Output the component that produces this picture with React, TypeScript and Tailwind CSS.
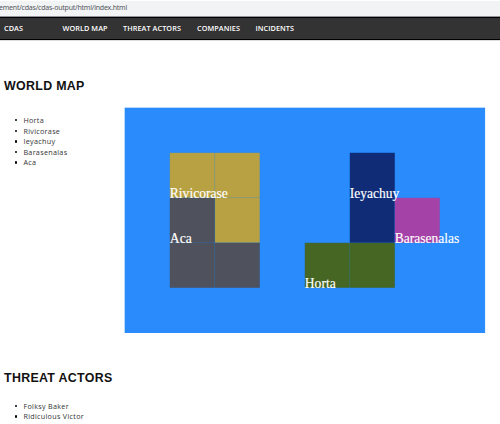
const CELL = 45;

type Region = { name: string; color: string; width: number; label: [number, number]; cells: [number, number][] };

const regions: Region[] = [
  { name: "Rivicorase", color: "#b8a143", width: 58, label: [1, 2], cells: [[1, 1], [2, 1], [2, 2]] },
  { name: "Aca", color: "#4f525c", width: 22, label: [1, 3], cells: [[1, 2], [1, 3], [2, 3]] },
  { name: "Ieyachuy", color: "#112c77", width: 49.5, label: [5, 2], cells: [[5, 1], [5, 2]] },
  { name: "Barasenalas", color: "#a542a8", width: 64.5, label: [6, 3], cells: [[6, 2]] },
  { name: "Horta", color: "#466624", width: 31, label: [4, 4], cells: [[4, 3], [5, 3]] },
];

function WorldMap() {
  return (
    <svg width="362" height="226" viewBox="0 0 362 226" className="block shrink-0">
      <rect x="1.1" y="1.1" width="359.6" height="224.5" fill="#2a8bfc" stroke="#1682fb" strokeWidth="0.8" />
      {regions.map((r) =>
        r.cells.map(([x, y]) => (
          <rect
            key={`${x}-${y}`}
            x={x * CELL + 0.8}
            y={y * CELL + 0.8}
            width={CELL}
            height={CELL}
            fill={r.color}
            stroke="#0878e8"
            strokeWidth="0.8"
            strokeOpacity="0.12"
          />
        )),
      )}
      {regions.map((r) => (
        <text
          key={r.name}
          x={r.label[0] * CELL + 0.8}
          y={r.label[1] * CELL + 0.8}
          textLength={r.width}
          lengthAdjust="spacingAndGlyphs"
          fill="#fff"
          stroke="#fff"
          strokeWidth="0.15"
          className="font-['Liberation_Serif',serif] text-[14px]"
        >
          {r.name}
        </text>
      ))}
    </svg>
  );
}

function Names({ items }: { items: string[] }) {
  return (
    <ul className="pl-[11px] text-[7.2px] leading-[10.6px] tracking-[0.3px] text-[#333]">
      {items.map((n) => (
        <li key={n} className="flex items-center gap-[6px] whitespace-nowrap">
          <span className="size-[2.4px] rounded-full bg-black" />
          {n}
        </li>
      ))}
    </ul>
  );
}

function Heading({ children, className }: { children: string; className: string }) {
  return (
    <h2 className={`font-['Liberation_Sans',sans-serif] text-[12.4px] font-bold leading-4 whitespace-nowrap text-[#111] ${className}`}>
      {children}
    </h2>
  );
}

export default function App() {
  return (
    <div className="h-[424px] w-[500px] overflow-hidden bg-white font-['Open_Sans',sans-serif]">
      <div className="h-[17px] border-t border-b border-t-white border-b-[#92949a] bg-[#f1f3f4] text-[7px] leading-[13px] tracking-[-0.22px] whitespace-nowrap text-[#55585c]">
        <span className="-ml-[1px] font-['Noto_Sans',sans-serif]">ement/cdas/cdas-output/html/index.html</span>
      </div>
      <nav className="flex h-[23px] items-center border-y border-black bg-[#333] pl-1 text-[7.3px] font-semibold tracking-[0.06px] whitespace-nowrap text-white">
        <span className="w-[58.5px]">CDAS</span>
        <span className="w-[60.5px]">WORLD MAP</span>
        <span className="w-[74px]">THREAT ACTORS</span>
        <span className="w-[58.5px]">COMPANIES</span>
        <span>INCIDENTS</span>
      </nav>
      <main className="border-t border-[#ddd] pl-1">
        <Heading className="mt-[37px] tracking-[0.32px]">WORLD MAP</Heading>
        <div className="mt-[13px] flex">
          <div className="w-[120px] shrink-0 pt-[8px]">
            <Names items={["Horta", "Rivicorase", "Ieyachuy", "Barasenalas", "Aca"]} />
          </div>
          <WorldMap />
        </div>
        <Heading className="mt-[37px] tracking-[0.32px]">THREAT ACTORS</Heading>
        <div className="pt-[14.5px]">
          <Names items={["Folksy Baker", "Ridiculous Victor"]} />
        </div>
      </main>
    </div>
  );
}
